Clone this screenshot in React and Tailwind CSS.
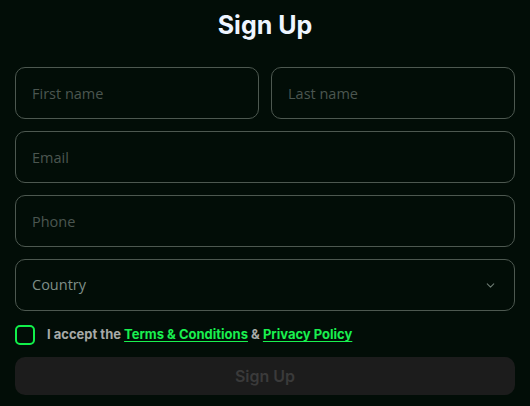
import { ChevronDown } from 'lucide-react'

const field =
  'h-[52px] w-full rounded-[10px] border border-[#4d5850] bg-transparent px-4 text-[14.5px] text-[#c9d4cc] placeholder:text-[#4b5650] outline-none'

export default function App() {
  return (
    <div
      className="min-h-[406px] w-[530px] bg-[#020d07] px-[15px]"
      style={{ fontFamily: '"Open Sans", sans-serif' }}
    >
      {/* Title */}
      <h1
        className="pt-[7px] text-center text-[25px] font-bold leading-[36px] text-[#eef5ff]"
        style={{ fontFamily: 'Inter, sans-serif' }}
      >
        Sign Up
      </h1>

      <form className="mt-[24px] flex flex-col gap-[12px]">
        <div className="flex gap-[12px]">
          <input className={field} placeholder="First name" />
          <input className={field} placeholder="Last name" />
        </div>
        <input className={field} placeholder="Email" />
        <input className={field} placeholder="Phone" />

        <div className="relative flex h-[52px] items-center rounded-[10px] border border-[#4d5850] px-4">
          <span className="text-[14.5px] text-[#7f8f87]">Country</span>
          <ChevronDown className="ml-auto mr-[1px] h-[13px] w-[13px] text-[#6d7a72]" strokeWidth={2} />
        </div>

        {/* Terms */}
        <label
          className="mt-[2px] flex items-center gap-[12px]"
          style={{ fontFamily: 'Inter, sans-serif' }}
        >
          <span className="h-[20px] w-[20px] rounded-[5px] border-2 border-[#11f04a]" />
          <span className="text-[13px] font-bold text-[#a7aaa8]">
            I accept the{' '}
            <a className="text-[#19f04f] underline underline-offset-2">Terms &amp; Conditions</a>{' '}
            &amp;{' '}
            <a className="text-[#19f04f] underline underline-offset-2">Privacy Policy</a>
          </span>
        </label>

        <button
          type="button"
          className="h-[38px] w-full rounded-[10px] bg-[#1c1c1c] text-[16px] font-semibold text-[#3a3a3a]"
          style={{ fontFamily: 'Inter, sans-serif' }}
        >
          Sign Up
        </button>
      </form>
    </div>
  )
}
